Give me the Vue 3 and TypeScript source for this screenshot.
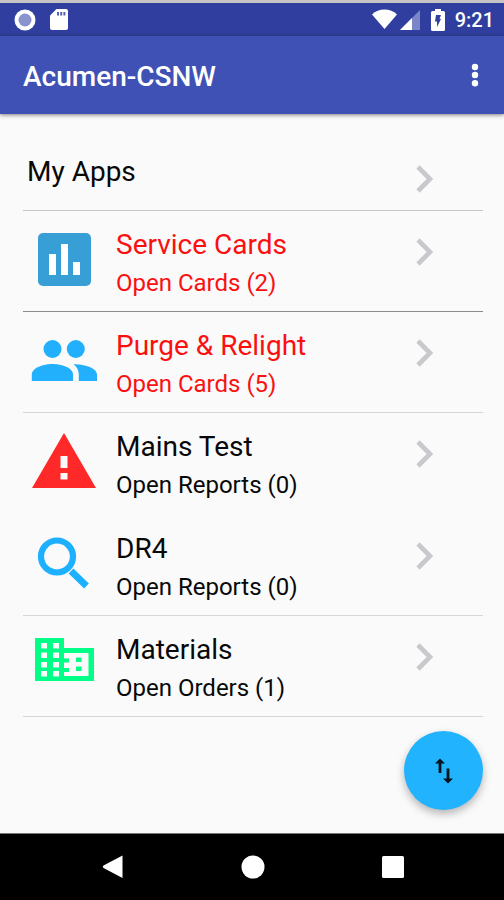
<script setup lang="ts">
type IconName = 'chart' | 'people' | 'warning' | 'search' | 'building'

interface AppEntry {
  title: string
  detail: string
  icon: IconName
  alert?: boolean
  divider: 'strong' | 'light' | 'none'
}

const entries: AppEntry[] = [
  { title: 'Service Cards', detail: 'Open Cards (2)', icon: 'chart', alert: true, divider: 'strong' },
  { title: 'Purge & Relight', detail: 'Open Cards (5)', icon: 'people', alert: true, divider: 'light' },
  { title: 'Mains Test', detail: 'Open Reports (0)', icon: 'warning', divider: 'none' },
  { title: 'DR4', detail: 'Open Reports (0)', icon: 'search', divider: 'light' },
  { title: 'Materials', detail: 'Open Orders (1)', icon: 'building', divider: 'light' },
]
</script>

<template>
  <div class="screen">
    <div class="status">
      <svg width="22" height="22" viewBox="0 0 22 22" aria-hidden="true">
        <circle cx="11" cy="11" r="10.5" fill="#fff" />
        <circle cx="11" cy="11" r="6.5" fill="#8a93cd" />
      </svg>
      <svg class="sd" width="18" height="21" viewBox="0 0 18 21" aria-hidden="true">
        <path d="M6.500 0H16a2 2 0 0 1 2 2V19a2 2 0 0 1-2 2H2a2 2 0 0 1-2-2V6.500Z" fill="#fff" />
        <path d="M7 3h2v3.500H7zM10.200 3h2v3.500h-2zM13.400 3h2v3.500h-2z" fill="#5561b5" />
      </svg>
      <span class="spacer"></span>
      <svg width="25" height="21" viewBox="0 0 26 21" aria-hidden="true">
        <path d="M13 20.500 0 5.200C3.500 1.700 8 0 13 0s9.500 1.700 13 5.200Z" fill="#fff" />
      </svg>
      <svg class="signal" width="20" height="20" viewBox="0 0 20 20" aria-hidden="true">
        <path d="M20 0V20H0Z" fill="#7b86c8" />
        <path d="M12 8V20H0Z" fill="#fff" />
      </svg>
      <svg class="battery" width="14" height="22" viewBox="0 0 14 22" aria-hidden="true">
        <path d="M4 0h6v2h2.500a1.500 1.500 0 0 1 1.500 1.500v17a1.500 1.500 0 0 1-1.500 1.500h-11A1.500 1.500 0 0 1 0 20.500v-17A1.500 1.500 0 0 1 1.500 2H4Z" fill="#fff" />
        <path d="M5 6h5L8.500 10H10L6 18V12.500H4Z" fill="#303f9f" />
      </svg>
      <span class="time">9:21</span>
    </div>

    <header class="appbar">
      <h1>Acumen-CSNW</h1>
      <button class="more" type="button" aria-label="More options">
        <svg width="8" height="24" viewBox="0 0 8 24" aria-hidden="true">
          <g fill="#fff">
            <circle cx="4" cy="4" r="3.200" />
            <circle cx="4" cy="12" r="3.200" />
            <circle cx="4" cy="20.300" r="3.200" />
          </g>
        </svg>
      </button>
    </header>

    <main>
      <nav class="list" aria-label="Apps">
        <a class="heading" href="#apps">
          <span class="title">My Apps</span>
          <svg class="chevron" width="18" height="28" viewBox="0 0 18 28" aria-hidden="true">
            <path d="M2 2 14 14 2 26" fill="none" stroke="#c9c9cd" stroke-width="4.600" />
          </svg>
        </a>
        <a
          v-for="entry in entries"
          :key="entry.title"
          href="#entry"
          class="row"
          :class="[entry.divider, { alert: entry.alert }]"
        >
          <span class="icon">
            <svg v-if="entry.icon === 'chart'" width="66" height="66" viewBox="0 0 66 66" aria-hidden="true">
              <rect x="7" y="7" width="53" height="53" rx="5" fill="#379fd6" />
              <path d="M18 28h7v21h-7zM30 18h7v31h-7zM42 36h7v13h-7z" fill="#fff" />
            </svg>
            <svg v-else-if="entry.icon === 'people'" width="66" height="66" viewBox="0 0 66 66" aria-hidden="true">
              <g fill="#22b0fd">
                <circle cx="21.500" cy="22" r="9" />
                <circle cx="44.800" cy="22" r="9" />
                <path d="M0.800 54V47.500C0.800 40.500 13 37 21.500 37S42 40.500 42 47.500V54Z" />
                <path d="M42.500 37.200C52 37 66 40.500 66 47.500V54H47.800V47.500c0-4.500-2-7.800-5.300-10.300Z" />
              </g>
            </svg>
            <svg v-else-if="entry.icon === 'warning'" width="66" height="66" viewBox="0 0 66 66" aria-hidden="true">
              <path d="M33 5 65 60H1Z" fill="#ff2929" />
              <path d="M29.500 28h7v12h-7zM29.500 45h7v6.500h-7z" fill="#fafafa" />
            </svg>
            <svg v-else-if="entry.icon === 'search'" width="66" height="66" viewBox="0 0 66 66" aria-hidden="true">
              <g fill="none" stroke="#1cb0ff">
                <circle cx="26" cy="26.500" r="16" stroke-width="6.200" />
                <path d="M40 41 55.500 56" stroke-width="6.800" />
              </g>
            </svg>
            <svg v-else width="66" height="66" viewBox="0 0 66 66" aria-hidden="true">
              <path d="M4 7H33V17H63V50H4Z" fill="#00ff87" />
              <g fill="#fafafa">
                <path d="M33 22H57.500V45H33V41h5v-4h-5v-5.500h5v-4h-5Z" />
                <path d="M10 12h6v5.500h-6zM10 21.500h6V27h-6zM10 31h6v5.500h-6zM10 40h6v5.500h-6zM22 12h6v5.500h-6zM22 21.500h6V27h-6zM22 31h6v5.500h-6zM22 40h6v5.500h-6z" />
              </g>
              <path d="M45 26.500h5.500V31H45zM45 35.500h5.500V40H45z" fill="#00ff87" />
            </svg>
          </span>
          <span class="text">
            <span class="title">{{ entry.title }}</span>
            <span class="detail">{{ entry.detail }}</span>
          </span>
          <svg class="chevron" width="18" height="28" viewBox="0 0 18 28" aria-hidden="true">
            <path d="M2 2 14 14 2 26" fill="none" stroke="#c9c9cd" stroke-width="4.600" />
          </svg>
        </a>
      </nav>

      <button class="fab" type="button" aria-label="Sync">
        <svg width="20" height="26" viewBox="0 0 20 26" aria-hidden="true">
          <g fill="#07141c">
            <path d="M6 0.500 11 5.500H7.400V15H4.600V5.500H1Z" />
            <path d="M14 25.500 9 20.500h3.600V10.500h2.800V20.500H19Z" />
          </g>
        </svg>
      </button>
    </main>

    <footer class="navbar">
      <button type="button" aria-label="Back">
        <svg width="24" height="24" viewBox="0 0 24 24" aria-hidden="true">
          <path d="M21.500 0.500V23L2.500 13Q1 11.800 2.500 10.600Z" fill="#fff" />
        </svg>
      </button>
      <button type="button" aria-label="Home">
        <svg width="24" height="24" viewBox="0 0 24 24" aria-hidden="true">
          <circle cx="12" cy="12" r="11.500" fill="#fff" />
        </svg>
      </button>
      <button type="button" aria-label="Recents">
        <svg width="24" height="24" viewBox="0 0 24 24" aria-hidden="true">
          <rect x="1" y="1" width="22" height="22" rx="1.500" fill="#fff" />
        </svg>
      </button>
    </footer>
  </div>
</template>

<style>
body {
  margin: 0;
  background: #fafafa;
}
</style>

<style scoped>
.screen {
  display: flex;
  flex-direction: column;
  min-height: 100vh;
  background: #fafafa;
  color: #080808;
  font-family: Roboto, "Liberation Sans", sans-serif;
}

button {
  display: flex;
  align-items: center;
  justify-content: center;
  padding: 0;
  border: 0;
  background: none;
  cursor: pointer;
}

a {
  color: inherit;
  text-decoration: none;
}

.status {
  display: flex;
  align-items: center;
  height: 33px;
  padding: 0 10px 0 14px;
  border-top: 3px solid #c4c4c6;
  background: #303f9f;
  color: #fff;
}

.sd {
  margin-left: 14px;
}

.spacer {
  flex: 1;
}

.signal {
  margin-left: 3px;
}

.battery {
  margin-left: 11px;
}

.time {
  margin-left: 10px;
  font-size: 20px;
  font-weight: 500;
  line-height: 24px;
}

.appbar {
  display: flex;
  align-items: center;
  justify-content: space-between;
  height: 78px;
  padding: 0 17px 0 23px;
  background: #3f51b5;
  box-shadow: 0 1px 4px rgba(0, 0, 0, 0.5);
  color: #fff;
}

h1 {
  margin: 0;
  padding-top: 4px;
  font-size: 28px;
  font-weight: 500;
  line-height: 32px;
}

.more {
  width: 24px;
  height: 40px;
}

main {
  display: flex;
  flex: 1;
  flex-direction: column;
  justify-content: space-between;
  padding: 32px 21px 23px 23px;
}

.list {
  display: flex;
  flex-direction: column;
}

.heading,
.row {
  display: flex;
  align-items: flex-start;
  padding-right: 49px;
  border-bottom: 1px solid #d6d6d8;
}

.heading {
  justify-content: space-between;
  height: 64px;
  padding-left: 4px;
  border-bottom-color: #c6c6c8;
}

.heading .title {
  margin-top: 8px;
}

.heading .chevron {
  margin-top: 19px;
}

.row {
  height: 100px;
}

.row.strong {
  border-bottom-color: #8c8c90;
}

.row.none {
  border-bottom: 2px solid transparent;
}

.row.alert {
  color: #fb1010;
}

.icon {
  width: 66px;
  height: 66px;
  margin: 15px 0 0 8px;
}

.icon svg {
  display: block;
}

.text {
  display: flex;
  flex: 1;
  flex-direction: column;
  padding: 16px 0 0 19px;
}

.title {
  font-size: 28px;
  line-height: 36px;
}

.detail {
  font-size: 24px;
  line-height: 40px;
}

.row .chevron {
  margin-top: 27px;
}

.fab {
  align-self: flex-end;
  width: 79px;
  height: 79px;
  border-radius: 50%;
  background: #22b3ff;
  box-shadow: 0 4px 8px rgba(0, 0, 0, 0.28);
}

.navbar {
  display: flex;
  align-items: center;
  justify-content: center;
  gap: 92px;
  height: 66px;
  padding-left: 2px;
  border-top: 1px solid #777;
  background: #000;
}

.navbar button {
  width: 48px;
  height: 48px;
}
</style>
